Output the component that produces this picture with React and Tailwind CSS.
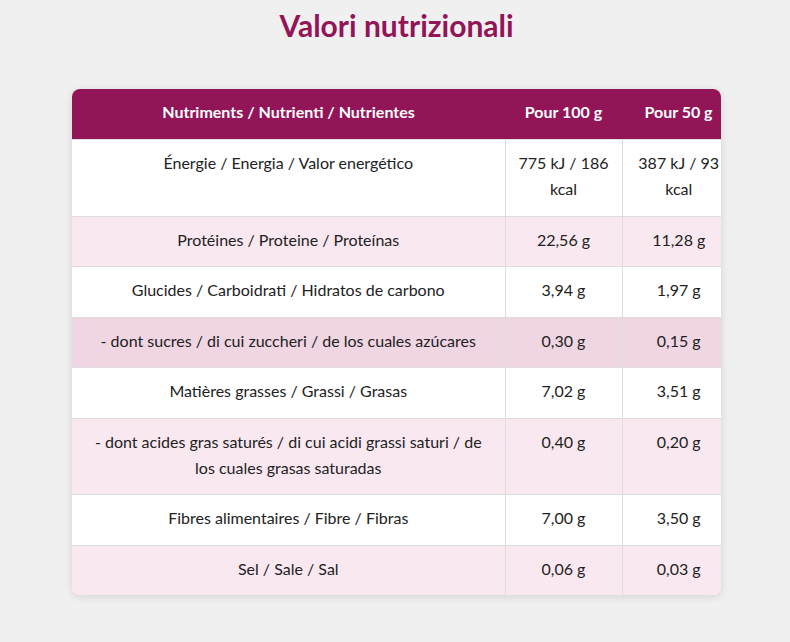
const ROWS = [
  { name: 'Énergie / Energia / Valor energético', per100: '775 kJ / 186 kcal', per50: '387 kJ / 93 kcal' },
  { name: 'Protéines / Proteine / Proteínas', per100: '22,56 g', per50: '11,28 g' },
  { name: 'Glucides / Carboidrati / Hidratos de carbono', per100: '3,94 g', per50: '1,97 g' },
  { name: '- dont sucres / di cui zuccheri / de los cuales azúcares', per100: '0,30 g', per50: '0,15 g', hover: true },
  { name: 'Matières grasses / Grassi / Grasas', per100: '7,02 g', per50: '3,51 g' },
  { name: '- dont acides gras saturés / di cui acidi grassi saturi / de los cuales grasas saturadas', per100: '0,40 g', per50: '0,20 g' },
  { name: 'Fibres alimentaires / Fibre / Fibras', per100: '7,00 g', per50: '3,50 g' },
  { name: 'Sel / Sale / Sal', per100: '0,06 g', per50: '0,03 g' },
]

export default function App() {
  return (
    <div className="min-h-[642px] bg-[#f0f0f0] pt-[6px] text-[#222]" style={{ fontFamily: 'Lato, "Noto Sans", sans-serif' }}>
      <h1 className="pl-[3px] text-center text-[30px] font-bold leading-[38px] text-[#921558]">Valori nutrizionali</h1>

      <div className="mt-[45px] ml-[72px] w-[649px] overflow-hidden rounded-lg bg-white shadow-[0_2px_8px_rgba(0,0,0,0.12)]">
        <table className="w-[663px] table-fixed border-collapse text-center text-[16px] leading-[26px]">
          <colgroup>
            <col className="w-[433px]" />
            <col className="w-[117px]" />
            <col className="w-[113px]" />
          </colgroup>
          <thead>
            <tr className="bg-[#921558] text-white">
              <th className="h-[50px] px-4 pt-[10px] pb-[14px] font-bold whitespace-nowrap">Nutriments / Nutrienti / Nutrientes</th>
              <th className="h-[50px] px-2 pt-[10px] pb-[14px] font-bold whitespace-nowrap">Pour 100 g</th>
              <th className="h-[50px] px-2 pt-[10px] pb-[14px] font-bold whitespace-nowrap">Pour 50 g</th>
            </tr>
          </thead>
          <tbody>
            {ROWS.map((row, i) => (
              <tr
                key={row.name}
                className={row.hover ? 'bg-[#f0d5e3]' : i % 2 ? 'bg-[#fae8f1]' : 'bg-white'}
              >
                <td className="border-t border-[#dddddd] px-4 pt-[10px] pb-[13.5px] align-top">{row.name}</td>
                <td className="border-t border-l border-[#dddddd] px-3 pt-[10px] pb-[13.5px] align-top">{row.per100}</td>
                <td className="border-t border-l border-[#dddddd] px-3 pt-[10px] pb-[13.5px] align-top">{row.per50}</td>
              </tr>
            ))}
          </tbody>
        </table>
      </div>
    </div>
  )
}
